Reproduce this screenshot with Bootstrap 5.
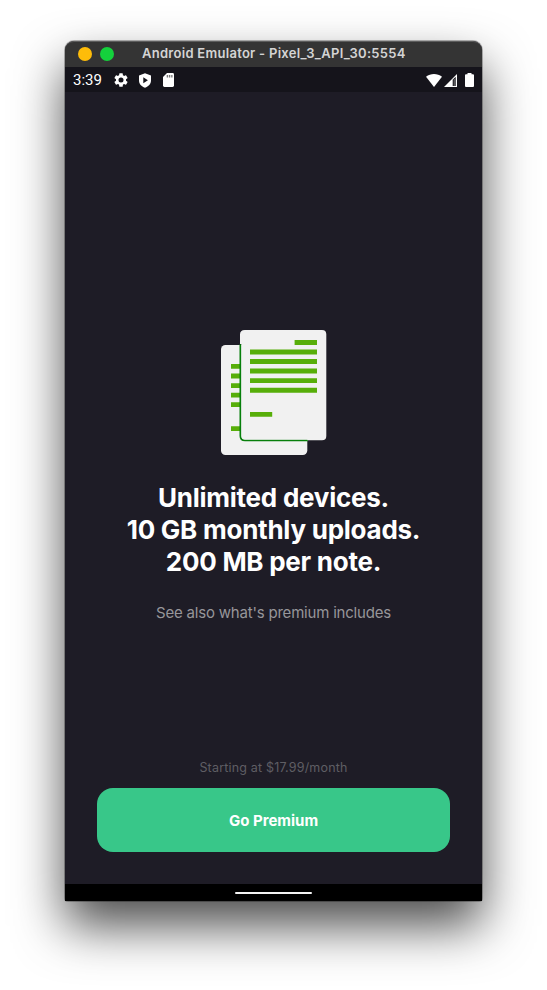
<!DOCTYPE html>
<html lang="en">
<head>
<meta charset="utf-8">
<meta name="viewport" content="width=device-width, initial-scale=1">
<title>Go Premium</title>
<link href="https://cdn.jsdelivr.net/npm/bootstrap@5.3.0/dist/css/bootstrap.min.css" rel="stylesheet">
<style>
body { height: 990px; overflow: hidden; background: #fff; padding-top: 41px; font-family: Inter, "Liberation Sans", sans-serif; }
.emulator { width: 417px; height: 860px; margin-left: 65px; border-radius: 9px 9px 3px 3px; background: #1e1c26; box-shadow: 0 0 0 1px rgba(0,0,0,.28), 0 25px 50px rgba(0,0,0,.7); }
.titlebar { height: 26px; background: #343434; border-top: 1px solid #5c5c5c; border-radius: 9px 9px 0 0; padding: 0 13px 2px; }
.dot { width: 14px; height: 14px; }
.dot-min { background: #febc09; }
.dot-max { background: #14d13c; }
.window-title { font-size: 13px; font-weight: 600; color: #d4d4d4; margin-left: 28px; letter-spacing: .28px; line-height: 23px; }
.statusbar { height: 25px; background: #15141b; padding: 1px 8px 0 8px; }
.clock { font-family: Roboto, sans-serif; font-size: 15px; width: 41px; line-height: 24px; }
.icon-shield { margin: 0 11px 0 10px; }
.icon-signal { margin: 0 8px 0 2px; }
.illustration { margin-top: 238px; }
.headline { font-size: 26px; line-height: 32px; margin-top: 26px; letter-spacing: -.25px; }
.see-also { font-size: 15px; line-height: 22px; color: #97969a; margin-top: 24px; letter-spacing: -.2px; }
.price { font-size: 12.5px; line-height: 18px; color: #5f5e64; margin-bottom: 11px; letter-spacing: .18px; }
.cta { height: 64px; margin: 0 32px 32px; padding: 3px 0 0; border-radius: 16px; background: #38c789; font-size: 15px; --bs-btn-hover-bg: #30b77c; }
.navstrip { height: 17px; background: #000; }
.handle { width: 77px; height: 2px; background: #f4f4f4; }
</style>
</head>
<body>
<main class="emulator d-flex flex-column">
  <header class="titlebar d-flex align-items-center flex-shrink-0">
    <span class="dot dot-min rounded-circle"></span>
    <span class="dot dot-max rounded-circle ms-2"></span>
    <span class="window-title text-nowrap">Android Emulator - Pixel_3_API_30:5554</span>
  </header>
  <div class="statusbar d-flex align-items-center text-white flex-shrink-0">
    <span class="clock">3:39</span>
    <svg width="14" height="14" viewBox="2 2 20 20" fill="#fff"><path d="M19.14 12.94c.04-.3.06-.61.06-.94s-.02-.64-.07-.94l2.03-1.58a.5.5 0 0 0 .12-.61l-1.92-3.32a.5.5 0 0 0-.59-.22l-2.39.96a7 7 0 0 0-1.62-.94l-.36-2.54a.5.5 0 0 0-.48-.41h-3.84a.5.5 0 0 0-.47.41l-.36 2.54a7.3 7.3 0 0 0-1.62.94l-2.39-.96a.5.5 0 0 0-.59.22L2.74 8.87a.5.5 0 0 0 .12.61l2.03 1.58a6 6 0 0 0-.02 1.88l-2.03 1.58a.5.5 0 0 0-.12.61l1.92 3.32c.12.22.37.29.59.22l2.39-.96c.5.38 1.03.7 1.62.94l.36 2.54c.05.24.24.41.48.41h3.84c.24 0 .44-.17.47-.41l.36-2.54a7 7 0 0 0 1.62-.94l2.39.96c.22.08.47 0 .59-.22l1.92-3.32a.5.5 0 0 0-.12-.61zM12 15.6a3.6 3.6 0 1 1 0-7.2 3.6 3.6 0 0 1 0 7.2z"/></svg>
    <svg width="14" height="15" viewBox="0 0 14 15" class="icon-shield" fill="#fff"><path fill-rule="evenodd" d="M7 .3 13 2.500v5c0 3.300-2.500 6.200-6 7.200-3.500-1-6-3.900-6-7.200v-5zM5.300 4.300v6L9.900 7.300z"/></svg>
    <svg width="11" height="14" viewBox="0 0 11 14"><path fill="#fff" d="M4 0h5.600Q11 0 11 1.400v11.200Q11 14 9.600 14H1.400Q0 14 0 12.600V4z"/><path fill="#777" d="M3.700 2h1.500v2.500H3.700zM6 2h1.300v2.500H6zM8.200 2h1.300v2.500H8.200z"/></svg>
    <svg width="16" height="13" viewBox="0 0 16 13" class="ms-auto" fill="#fff"><path d="M0 2.700C4.600-.9 11.400-.9 16 2.700L8 13z"/></svg>
    <svg width="13" height="13" viewBox="0 0 13 13" class="icon-signal"><path fill="#fff" d="M0 13 13 0v13z"/><path fill="#15141b" d="M8.700 5.800 11.700 2.800V12H8.700z"/><path fill="#777" d="M9.700 5h1v7h-1z"/></svg>
    <svg width="9" height="14" viewBox="0 0 9 14" fill="#fff"><path d="M2.500 0h4v1.200H8q1 0 1 1V13q0 1-1 1H1q-1 0-1-1V2.200q0-1 1-1h1.500z"/></svg>
  </div>
  <section class="flex-grow-1 d-flex flex-column align-items-center text-center">
    <svg class="illustration flex-shrink-0" width="106" height="126" viewBox="0 0 106 126">
      <rect x="0" y="15" width="86.300" height="110" rx="4.500" fill="#f1f1f1"/>
      <path fill="#57ae09" d="M10 34h10v4.800H10zM10 43.600h10v4.800H10zM10 53.200h10V58H10zM10 62.700h10v4.800H10zM10 72.300h10v4.800H10zM10 96.300h10v4.800H10z"/>
      <path d="M19.500 14.300V106q0 4.300 4.500 4.300h63" fill="none" stroke="#077f0b" stroke-width="2"/>
      <path fill="#f1f1f1" d="M23.800 0H101q4.300 0 4.300 4.300V106q0 4.300-4.300 4.300H86.300v-.6H24q-3.700 0-3.700-3.700V14H19V4.500Q19 0 23.800 0z"/>
      <path fill="#57ae09" d="M73.600 10H96v4.900H73.600zM29 19.500h67v4.900H29zM29 29.100h67V34H29zM29 38.600h67v4.900H29zM29 48.200h67v4.900H29zM29 57.800h67v4.900H29zM29 82h22.200v4.800H29z"/>
    </svg>
    <h1 class="headline fw-bold text-white mb-0 text-nowrap">Unlimited devices.<br>10 GB monthly uploads.<br>200 MB per note.</h1>
    <p class="see-also mb-0">See also what's premium includes</p>
    <p class="price mt-auto">Starting at $17.99/month</p>
    <button type="button" class="btn cta align-self-stretch flex-shrink-0 border-0 text-white fw-bold">Go Premium</button>
  </section>
  <footer class="navstrip d-flex align-items-center justify-content-center flex-shrink-0"><span class="handle rounded-pill"></span></footer>
</main>
<script src="https://cdn.jsdelivr.net/npm/bootstrap@5.3.0/dist/js/bootstrap.bundle.min.js"></script>
</body>
</html>
